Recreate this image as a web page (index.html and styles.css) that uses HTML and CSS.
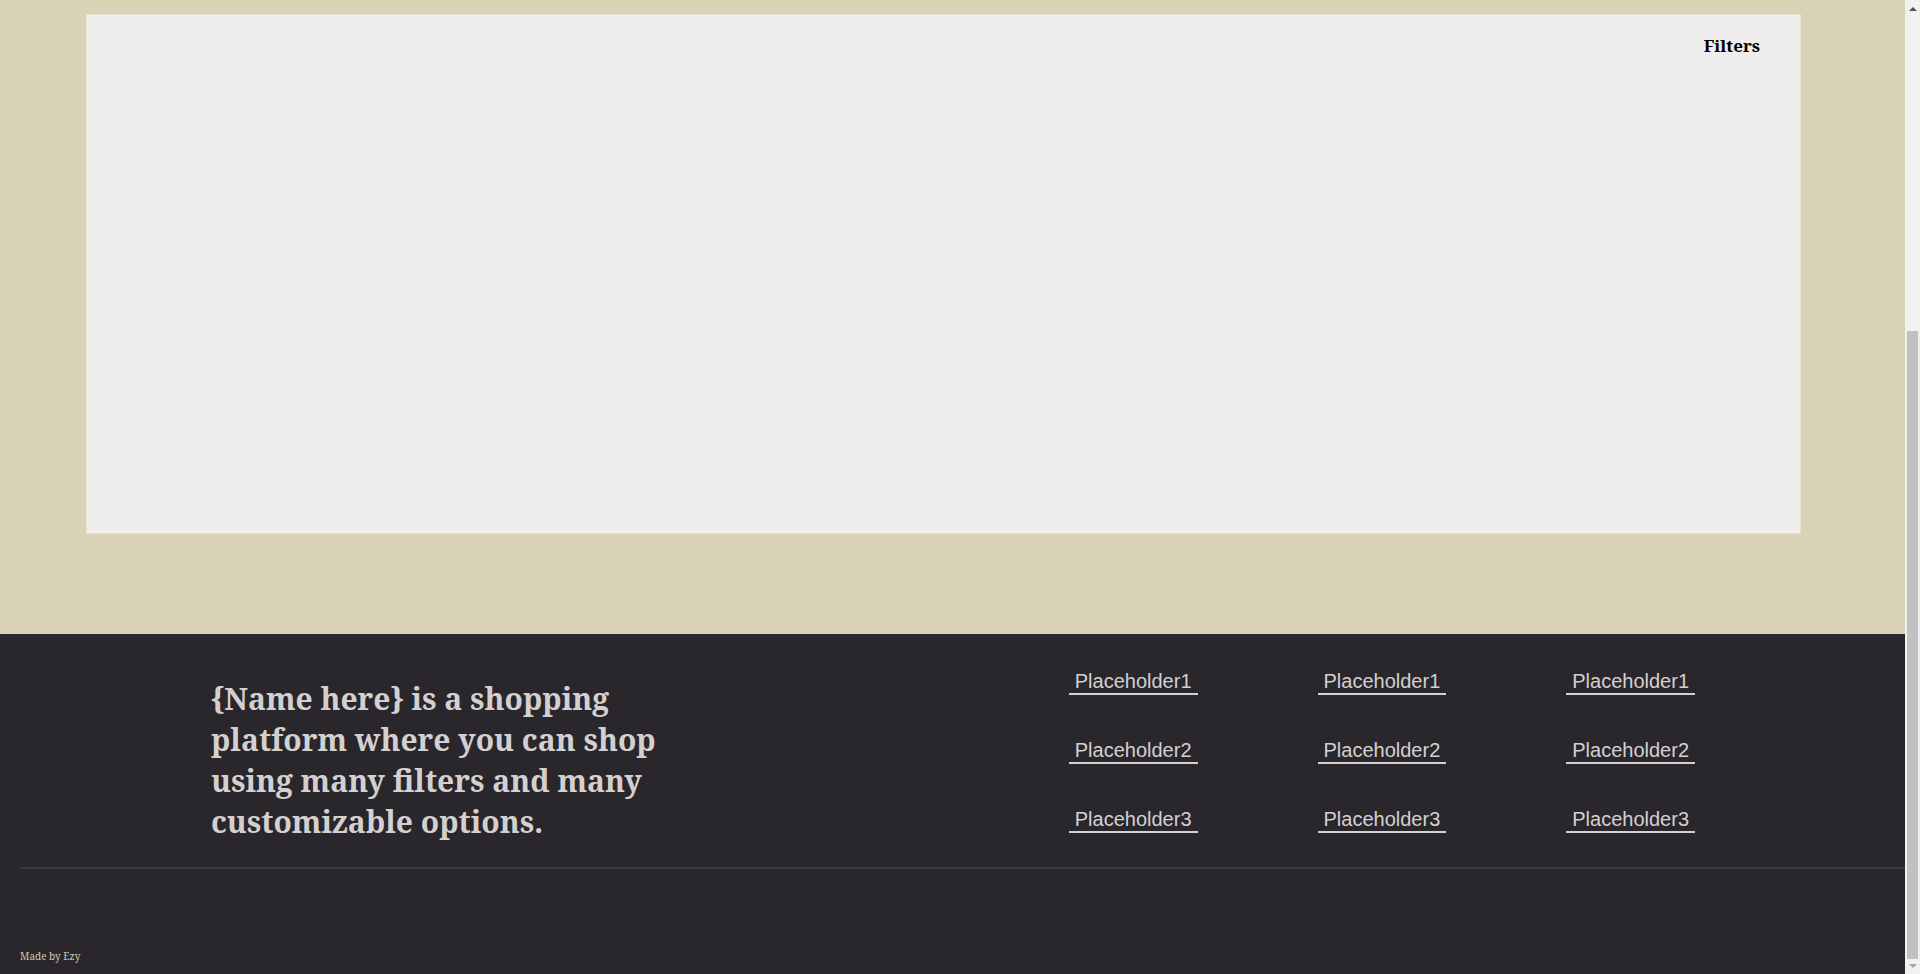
FILE: index.html
```html
<!DOCTYPE html>
<html lang="en">
<head>
<meta charset="utf-8">
<title>Shop</title>
<link rel="stylesheet" href="styles.css">
</head>
<body>
<div class="page">
  <main class="content">
    <section class="panel">
      <div class="panel-head">
        <span class="filters-title">Filters</span>
      </div>
    </section>
  </main>
  <footer class="footer">
    <div class="footer-top">
      <p class="about">{Name here} is a shopping platform where you can shop using many filters and many customizable options.</p>
      <nav class="links">
        <div class="link-col">
          <a class="link" href="#">Placeholder1</a>
          <a class="link" href="#">Placeholder2</a>
          <a class="link" href="#">Placeholder3</a>
        </div>
        <div class="link-col">
          <a class="link" href="#">Placeholder1</a>
          <a class="link" href="#">Placeholder2</a>
          <a class="link" href="#">Placeholder3</a>
        </div>
        <div class="link-col">
          <a class="link" href="#">Placeholder1</a>
          <a class="link" href="#">Placeholder2</a>
          <a class="link" href="#">Placeholder3</a>
        </div>
      </nav>
    </div>
    <hr class="divider">
    <div class="credit">Made by Ezy</div>
  </footer>
</div>
<div class="scrollbar" aria-hidden="true">
  <span class="sb-arrow sb-up"></span>
  <span class="sb-track"><span class="sb-thumb"></span></span>
  <span class="sb-arrow sb-down"></span>
</div>
</body>
</html>
```
FILE: styles.css
```css
body {
  margin: 0;
  background: #d9d2b6;
  font-family: "Noto Serif", "DejaVu Serif", serif;
}
.page {
  margin-right: 15px;
}
.content {
  padding: 14px 104px 100px 86px;
}
.panel {
  height: 520px;
  box-sizing: border-box;
  background: #efedee;
  border: 1px solid #e4e1d6;
  padding: 19px 40px 0 0;
}
.panel-head {
  display: flex;
  justify-content: flex-end;
}
.filters-title {
  font-weight: 700;
  font-size: 17px;
  color: #000;
}
.footer {
  background: #29272c;
  height: 340px;
  box-sizing: border-box;
  padding-top: 36px;
  display: flex;
  flex-direction: column;
}
.footer-top {
  display: flex;
  justify-content: space-between;
  align-items: flex-start;
  padding: 0 210px 0 211px;
}
.about {
  margin: 8px 0 0 0;
  width: 470px;
  font-size: 30px;
  font-weight: 700;
  color: #d4d0d0;
}
.links {
  display: flex;
  gap: 120px;
}
.link-col {
  display: flex;
  flex-direction: column;
  align-items: flex-start;
  gap: 44px;
}
.link {
  font-family: "Liberation Sans", Arial, sans-serif;
  font-size: 20px;
  color: #d4d0d0;
  text-decoration: none;
  padding: 0 6px;
  border-bottom: 2px solid #d4d0d0;
}
.divider {
  margin: 25px 0 0 20px;
  border: 0;
  height: 2px;
  background: #3a383e;
}
.credit {
  margin: auto 0 11px 20px;
  font-size: 10px;
  color: #d2c6ab;
}
.scrollbar {
  position: fixed;
  top: 0;
  right: 0;
  bottom: 0;
  width: 15px;
  background: #f1f1f1;
  display: flex;
  flex-direction: column;
}
.sb-arrow {
  height: 17px;
  flex: none;
  display: flex;
  justify-content: center;
  align-items: center;
}
.sb-up::before {
  content: "";
  border-left: 4px solid transparent;
  border-right: 4px solid transparent;
  border-bottom: 4px solid #505050;
}
.sb-down::before {
  content: "";
  border-left: 4px solid transparent;
  border-right: 4px solid transparent;
  border-top: 4px solid #a3a3a3;
}
.sb-track {
  flex: 1;
  display: flex;
  flex-direction: column;
  justify-content: flex-end;
  padding: 0 2px;
}
.sb-thumb {
  height: 628px;
  margin-bottom: -2px;
  background: #c1c1c1;
}
```
